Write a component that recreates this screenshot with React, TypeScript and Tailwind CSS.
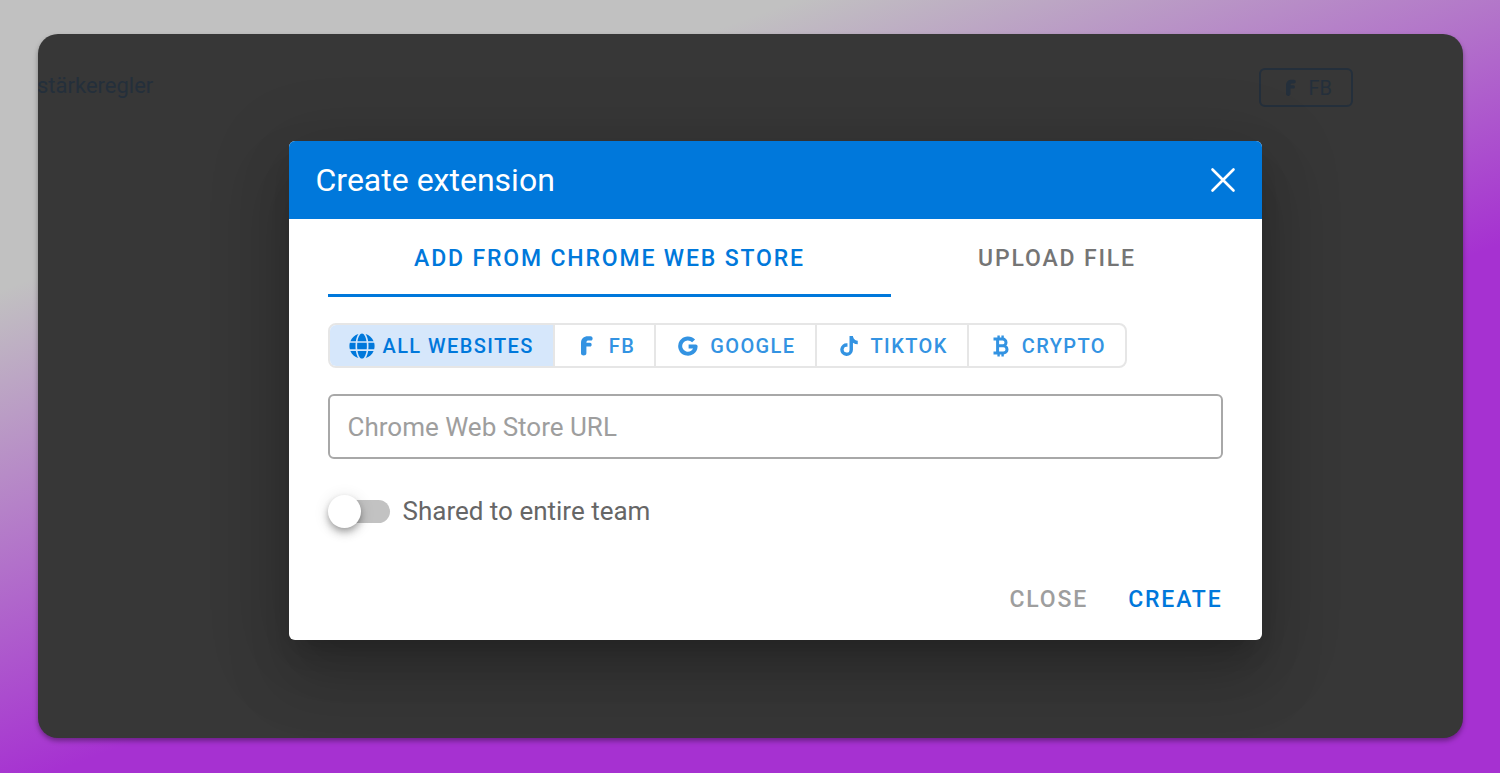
import React, { useState } from 'react'
import { FaGlobe, FaTiktok } from 'react-icons/fa'

const FacebookIcon = ({ className }: { className?: string }) => (
  <svg className={className} viewBox="0 0 12 20" fill="currentColor">
    <path d="M0 17.3V7C0 2.5 2.8.2 7 .2H9.5C12.3.2 12.3 4.5 9.8 4.6H8C6 4.6 5.4 5.2 5.4 6.8H9C11.2 6.8 11.2 10.6 9 10.6H5.4V17.3C5.4 20.2 0 20.2 0 17.3Z" />
  </svg>
)

const GoogleIcon = ({ className }: { className?: string }) => (
  <svg className={className} viewBox="0 0 20 20" fill="none" stroke="currentColor" strokeWidth="4">
    <path d="M15.6 4.9A7.7 7.7 0 1 0 17.6 10.4H10.6" strokeLinejoin="round" />
  </svg>
)

const BitcoinIcon = ({ className }: { className?: string }) => (
  <svg className={className} viewBox="0 0 16 22" fill="none" stroke="currentColor">
    <path d="M.5 4H9.6A3.3 3.3 0 0 1 9.6 10.8H4M9.6 10.8H10.4A3.5 3.5 0 0 1 10.4 18H.5M4.6 4V18" strokeWidth="3" />
    <path d="M5.6 .6V4M9.6 .6V4M5.6 18V21.4M9.6 18V21.4" strokeWidth="2.4" />
  </svg>
)

const platforms = [
  { name: 'ALL WEBSITES', icon: <FaGlobe className="size-[26px]" />, style: 'gap-2 pl-[19px]' },
  { name: 'FB', icon: <FacebookIcon className="w-3 h-5" />, style: 'gap-4 pl-[26px]' },
  { name: 'GOOGLE', icon: <GoogleIcon className="size-5" />, style: 'gap-3 pl-[22px]' },
  { name: 'TIKTOK', icon: <FaTiktok className="size-5" />, style: 'gap-3 pl-[22px]' },
  { name: 'CRYPTO', icon: <BitcoinIcon className="w-4 h-[22px]" />, style: 'gap-[13px] pl-6' },
]

const App = () => {
  const [platform, setPlatform] = useState('ALL WEBSITES')
  const [url, setUrl] = useState('')
  const [shared, setShared] = useState(false)

  return (
    <main className="min-h-screen flex pl-[38px] pr-[37px] pt-[34px] pb-[35px] bg-[linear-gradient(160deg,#c1c1c1_22%,#a631d1_60%)] font-[Roboto,sans-serif]">
      <div className="flex-1 min-w-0 rounded-[20px] bg-[#373737] overflow-hidden shadow-[0_3px_5px_rgba(0,0,0,0.35)]">
        {/* Dimmed page header */}
        <header className="flex items-start justify-between pt-[34px] pr-[110px] text-[#242f3b]">
          <span className="-ml-px text-[22px] leading-9">stärkeregler</span>
          <button className="flex items-center gap-3 h-[39px] pl-[25px] pr-[19px] border-2 border-[#242f3b] rounded-md text-xl">
            <FacebookIcon className="w-[10px] h-[18px]" />
            FB
          </button>
        </header>

        {/* Dialog */}
        <div className="flex justify-center pl-[49px] pt-[34px]">
          <section
            role="dialog"
            aria-labelledby="dialog-title"
            className="w-full max-w-[973px] rounded-md overflow-hidden bg-white shadow-[0_18px_24px_-11px_rgba(0,0,0,0.2),0_39px_62px_5px_rgba(0,0,0,0.14),0_15px_75px_13px_rgba(0,0,0,0.12)]"
          >
            <div className="flex items-center justify-between h-[78px] pl-[27px] pr-[26px] bg-[#0078db] text-white">
              <h1 id="dialog-title" className="text-[32px] leading-10">Create extension</h1>
              <button aria-label="Close dialog">
                <svg className="size-[26px]" viewBox="0 0 26 26" fill="none" stroke="currentColor" strokeWidth="2.6" strokeLinecap="round">
                  <path d="M2.5 2.5l21 21M23.5 2.5l-21 21" />
                </svg>
              </button>
            </div>

            <div className="px-[39px]">
              <div role="tablist" className="flex h-[78px] text-[23px] font-medium tracking-[0.08em]">
                <button role="tab" aria-selected="true" className="flex-auto pt-1.5 border-b-3 border-[#0078db] text-[#0078db]">
                  ADD FROM CHROME WEB STORE
                </button>
                <button role="tab" aria-selected="false" className="flex-auto pt-1.5 border-b-3 border-transparent text-[#757575]">
                  UPLOAD FILE
                </button>
              </div>

              <div className="mt-[26px] flex w-fit h-[45px] border-2 border-[#e6e6e6] rounded-lg overflow-hidden divide-x-2 divide-[#e6e6e6]">
                {platforms.map((item) => (
                  <button
                    key={item.name}
                    onClick={() => setPlatform(item.name)}
                    className={`flex items-center pr-[19px] text-xl leading-6 font-medium tracking-[0.07em] ${item.style} ${
                      platform === item.name ? 'bg-[#d6e7fb] text-[#0078db]' : 'text-[#3393e2]'
                    }`}
                  >
                    {item.icon}
                    {item.name}
                  </button>
                ))}
              </div>

              <input
                type="url"
                aria-label="Chrome Web Store URL"
                placeholder="Chrome Web Store URL"
                value={url}
                onChange={(e) => setUrl(e.target.value)}
                className="block mt-[26px] w-full h-[65px] px-[18px] border-2 border-[#a8a8a8] rounded-md text-[26px] text-[#333] placeholder:text-[#9e9e9e] outline-none"
              />

              <label className="mt-[35px] flex w-fit items-center gap-[13px] text-[26px] leading-[34px] text-[#666]">
                <span className="relative flex h-[33px] w-[62px] items-center pl-1">
                  <input
                    type="checkbox"
                    role="switch"
                    checked={shared}
                    onChange={(e) => setShared(e.target.checked)}
                    className="peer appearance-none h-[23px] w-full rounded-full bg-[#c2c2c2] checked:bg-[#80bced]"
                  />
                  <span className="absolute left-0 size-[33px] rounded-full bg-white pointer-events-none shadow-[0_3px_6px_-1px_rgba(0,0,0,0.25),0_6px_8px_rgba(0,0,0,0.14),0_2px_16px_rgba(0,0,0,0.12)] peer-checked:left-[29px] peer-checked:bg-[#0078db]" />
                </span>
                Shared to entire team
              </label>

              <div className="mt-[52px] pb-5 flex justify-end gap-10 text-[23px] leading-10 font-medium tracking-[0.08em]">
                <button className="text-[#9e9e9e]">CLOSE</button>
                <button className="text-[#0078db]">CREATE</button>
              </div>
            </div>
          </section>
        </div>
      </div>
    </main>
  )
}

export default App
